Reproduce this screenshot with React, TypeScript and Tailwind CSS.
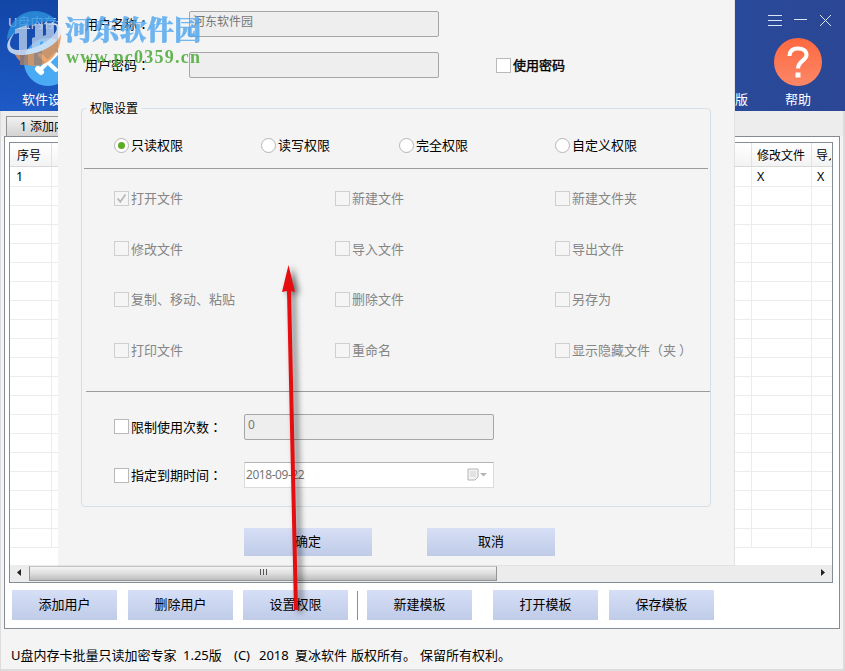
import type { FC, ReactNode } from 'react'
import clsx from 'clsx'

const radios = [
  { label: '只读权限', width: 'w-[147px]' },
  { label: '读写权限', width: 'w-[138px]' },
  { label: '完全权限', width: 'w-[156px]' },
  { label: '自定义权限', width: 'w-[100px]' },
]

const permissions = [
  ['打开文件', '新建文件', '新建文件夹'],
  ['修改文件', '导入文件', '导出文件'],
  ['复制、移动、粘贴', '删除文件', '另存为'],
  ['打印文件', '重命名', '显示隐藏文件（夹）'],
]

const columnWidths = ['w-[221px]', 'w-[220px]', 'w-[140px]']

const tableRows = Array.from({ length: 20 }, (_, i) => i)

// full-width colons and brackets sit in the middle of their box
const Label: FC<{ text: string }> = ({ text }) => (
  <span>
    {text.split(/([：（）])/).map((part, i) =>
      i % 2 === 1 ? (
        <span
          key={i}
          className={clsx("font-['Noto_Sans_CJK_TC',sans-serif] leading-none", part === '）' && 'ml-[3px]')}
        >
          {part}
        </span>
      ) : (
        part
      )
    )}
  </span>
)

interface CheckProps {
  label: string
  checked?: boolean
  disabled?: boolean
  className?: string
}

const Check: FC<CheckProps> = ({ label, checked, disabled, className }) => (
  <label className={clsx('flex h-5 items-center gap-[2px] whitespace-nowrap', disabled && 'text-[#858585]', className)}>
    <span
      className={clsx(
        'flex h-[15px] w-[15px] shrink-0 items-center justify-center border',
        disabled ? 'border-[#cfcfcf] bg-[#f5f5f5]' : 'border-[#b9b9b9] bg-white'
      )}
    >
      {checked ? (
        <svg width="11" height="11" viewBox="0 0 11 11" fill="none" stroke="#b8b8b8" strokeWidth="1.8">
          <path d="M1.5 5.5 4.3 8.7 9.5 1.5" />
        </svg>
      ) : null}
    </span>
    <Label text={label} />
  </label>
)

const Radio: FC<{ label: string; checked?: boolean; className?: string }> = ({ label, checked, className }) => (
  <label className={clsx('flex h-5 items-center gap-[2px] whitespace-nowrap', className)}>
    <span className="flex h-[15px] w-[15px] shrink-0 items-center justify-center rounded-full border border-[#b5b5b5] bg-white">
      {checked ? <span className="h-[7px] w-[7px] rounded-full bg-[#5cab22]" /> : null}
    </span>
    {label}
  </label>
)

const Button: FC<{ children: ReactNode; className?: string }> = ({ children, className }) => (
  <button
    type="button"
    className={clsx('shrink-0 bg-gradient-to-b from-[#d6dff6] to-[#bfcbe8] pb-[2px] text-center', className)}
  >
    {children}
  </button>
)

const Header: FC = () => (
  <header className="relative flex h-[111px] shrink-0 justify-between bg-gradient-to-r from-[#1b55bd] via-[#2550a8] to-[#2b4795] text-white">
    <div className="absolute inset-y-0 left-0 w-[300px] bg-gradient-to-b from-[#0c3c98]/60 to-[#2060d0]/50" />
    <div className="relative w-[58px] overflow-hidden">
      <div className="mt-[12px] ml-[8px] h-5 whitespace-nowrap text-[13px] text-[#c8d8f4]">U盘内存卡</div>
      <div className="mt-[6px] ml-[24px] flex h-[48px] w-[48px] items-center justify-center rounded-full bg-[#4aaaf4]">
        <svg width="28" height="28" viewBox="0 0 28 28" fill="none" stroke="white" strokeWidth="4" strokeLinecap="round">
          <path d="M6 7 22 22M22 6 5 23" />
          <path d="M4 21 7 24" strokeWidth="6" />
        </svg>
      </div>
      <div className="mt-[3px] ml-[22px] whitespace-nowrap text-[13px] leading-5">软件设置</div>
    </div>
    <div className="relative flex w-[115px] flex-col">
      <div className="mt-[14px] ml-[38px] flex h-[13px] items-center gap-[12px]">
        <svg width="14" height="13" viewBox="0 0 14 13" stroke="#dce5f6">
          <path d="M0 1.5H14M0 6.5H14M0 11.5H14" />
        </svg>
        <svg width="13" height="13" viewBox="0 0 13 13" stroke="#dce5f6">
          <path d="M0 5.5H13" />
        </svg>
        <svg width="13" height="13" viewBox="0 0 13 13" stroke="#dce5f6">
          <path d="M1 1 12 12M12 1 1 12" />
        </svg>
      </div>
      <div className="mt-[11px] ml-[44px] flex h-[48px] w-[48px] items-center justify-center rounded-full bg-gradient-to-b from-[#ff6840] to-[#fb8766]">
        <svg width="24" height="34" viewBox="0 0 24 34" fill="none" stroke="white" strokeWidth="4">
          <path d="M3.5 11C3.5 5.5 7 3.5 12 3.5S20.5 5.7 20.5 10C20.5 15.5 12 16 12 23.5" />
          <path d="M12 27.5V32.5" strokeWidth="5" />
        </svg>
      </div>
      <div className="mt-[3px] flex text-[13px] leading-5">
        <span className="ml-[5px] w-[50px]">版</span>
        <span>帮助</span>
      </div>
    </div>
  </header>
)

const Table: FC = () => (
  <div className="flex h-[441px] flex-col overflow-hidden border border-[#858c94] bg-white">
    <div className="flex h-[24px] shrink-0 border-b border-[#d9d9d9] bg-gradient-to-b from-white to-[#f3f3f4] text-[12px] leading-[25px] whitespace-nowrap">
      <div className="w-[42px] border-r border-[#e2e2e2] pl-[7px]">序号</div>
      <div className="w-[700px] border-r border-[#e2e2e2] pl-[6px]">用户</div>
      <div className="w-[60px] border-r border-[#e2e2e2] pl-[5px]">修改文件</div>
      <div className="w-[19px] overflow-hidden pl-[4px]">导入</div>
    </div>
    <div className="h-[398px] overflow-hidden">
      {tableRows.map((row) => (
        <div
          key={row}
          className={clsx('flex border-b border-[#ececec] text-[12.5px] leading-[20px]', row === 0 ? 'h-[20px]' : 'h-[19px]')}
        >
          <div className="w-[42px] border-r border-[#ececec] pl-[6px]">{row === 0 ? '1' : ''}</div>
          <div className="w-[700px] border-r border-[#ececec] pl-[6px]">{row === 0 ? '河' : ''}</div>
          <div className="w-[60px] border-r border-[#ececec] pl-[5px]">{row === 0 ? 'X' : ''}</div>
          <div className="pl-[5px]">{row === 0 ? 'X' : ''}</div>
        </div>
      ))}
    </div>
    <div className="flex h-[17px] shrink-0 items-center bg-[#ececec]">
      <svg width="19" height="17" viewBox="0 0 19 17">
        <path d="M11 4V11L7 7.5Z" fill="#222" />
      </svg>
      <div className="flex h-[15px] w-[468px] items-center justify-center border border-[#969696] border-t-[#c4c4c4] bg-gradient-to-b from-[#f4f4f4] via-[#dedede] to-[#bdbdbd] pb-[2px]">
        <svg width="9" height="7" viewBox="0 0 9 7" stroke="#555">
          <path d="M1.5 0V6M4.5 0V6M7.5 0V6" />
        </svg>
      </div>
      <svg className="ml-auto" width="19" height="17" viewBox="0 0 19 17">
        <path d="M8 4V11L12 7.5Z" fill="#222" />
      </svg>
    </div>
  </div>
)

const PermissionDialog: FC = () => (
  <div className="absolute top-0 left-[58px] flex h-[566px] w-[677px] flex-col border-r border-b border-[#e2e2e2] bg-[#f4f4f4]">
    <div className="mt-[11px] ml-[27px] flex items-center">
      <span className="w-[104px]">
        <Label text="用户名称：" />
      </span>
      <div className="h-[26px] w-[250px] rounded-[2px] border border-[#a6a6a6] bg-[#eeeeee] pl-[3px] text-[12px] leading-[20px] text-[#777]">
        河东软件园
      </div>
    </div>
    <div className="mt-[15px] ml-[27px] flex items-center">
      <span className="w-[104px]">
        <Label text="用户密码：" />
      </span>
      <div className="h-[26px] w-[250px] rounded-[2px] border border-[#a6a6a6] bg-[#eeeeee]" />
      <Check label="使用密码" className="ml-[57px] [-webkit-text-stroke:0.4px_black]" />
    </div>

    <fieldset className="mt-[21px] ml-[23px] flex h-[408px] w-[630px] min-w-0 flex-col rounded-[4px] border border-[#d5dfe5]">
      <legend className="ml-[4px] h-[18px] px-[4px] text-[12px] leading-[19px]">权限设置</legend>
      <div className="mt-[18px] ml-[32px] flex">
        {radios.map((radio, i) => (
          <Radio key={radio.label} label={radio.label} checked={i === 0} className={radio.width} />
        ))}
      </div>
      <div className="mt-[13px] ml-[2px] h-px w-[624px] shrink-0 bg-[#9b9b9b]" />
      <div className="mt-[19px] ml-[32px] flex flex-col gap-[30.7px]">
        {permissions.map((row, i) => (
          <div key={row[0]} className="flex">
            {row.map((label, j) => (
              <Check key={label} label={label} disabled checked={i === 0 && j === 0} className={columnWidths[j]} />
            ))}
          </div>
        ))}
      </div>
      <div className="mt-[30.7px] ml-[4px] h-px w-[624px] shrink-0 bg-[#9b9b9b]" />
      <div className="mt-[22px] ml-[32px] flex items-center">
        <Check label="限制使用次数：" className="w-[130px]" />
        <div className="h-[26px] w-[250px] rounded-[2px] border border-[#a6a6a6] bg-[#eeeeee] pl-[3px] text-[12px] leading-[20px] text-[#777]">
          0
        </div>
      </div>
      <div className="mt-[22.3px] ml-[32px] flex items-center">
        <Check label="指定到期时间：" className="w-[130px]" />
        <div className="flex h-[26px] w-[250px] items-center border border-[#dadada] border-t-[#b5b5b5] bg-white pr-[5px] pb-px pl-px text-[12px] tracking-[-0.45px] text-[#777]">
          2018-09-22
          <svg className="ml-auto" width="21" height="13" viewBox="0 0 21 13">
            <path d="M1 1H11V9L8 12H1Z" fill="#f4f4f4" stroke="#b4b4b4" />
            <path d="M3 4H9M3 6H9M3 8H9" stroke="#d0d0d0" />
            <path d="M13 5H20L16.5 8.5Z" fill="#b4b4b4" />
          </svg>
        </div>
      </div>
    </fieldset>

    <div className="mt-[21px] ml-[186px] flex gap-[55px]">
      <Button className="h-[28px] w-[128px]">确定</Button>
      <Button className="h-[28px] w-[128px]">取消</Button>
    </div>
  </div>
)

const Watermark: FC = () => (
  <div className="absolute top-[9px] left-[4px] flex opacity-80">
    <svg width="60" height="60" viewBox="0 0 60 60">
      <path d="M3 31C4 14 16 2 31 2C41 2 50 7 54 14C46 9 16 16 3 31Z" fill="#2f93df" />
      <path d="M10 44C22 46 43 40 52 27L57 25C57 43 46 57 30 57C21 57 14 52 10 44Z" fill="#e8924d" />
      <path d="M11 20 23 16V43H15V24L11 25ZM31 15H39V27L42 26V14H50V30C47 36 43 39 39 41V32L36 33V42H28V29L31 28Z" fill="#b5cdea" />
      <path d="M24 43V56H16V44ZM38 40V56H30V43Z" fill="#ad7f62" />
      <path d="M11 23C-3 37 3 47 20 46C39 45 60 32 57 20C56 15 51 13 44 14C52 14 55 18 51 24C44 35 25 42 13 41C4 40 4 33 11 23Z" fill="#e4edf7" />
    </svg>
    <div className="flex flex-col whitespace-nowrap">
      <div className="mt-[3px] ml-px font-['Noto_Serif_CJK_SC','Noto_Sans_CJK_SC',serif] text-[27px] leading-[34px] font-black tracking-[0.3px] text-[#4ba4ef] [-webkit-text-stroke:0.5px_#4ba4ef]">
        河东软件园
      </div>
      <div className="ml-[2px] font-['Liberation_Serif',serif] text-[18px] leading-[22px] font-bold tracking-[1.25px] text-[#42a52d]">
        www.pc0359.cn
      </div>
    </div>
  </div>
)

const Arrow: FC = () => (
  <svg className="pointer-events-none absolute top-[260px] left-[270px] drop-shadow-[4px_2px_3px_rgba(0,0,0,0.6)]" width="45" height="360" viewBox="0 0 45 360">
    <path d="M18.5 5 25 32 21 31 28 350H24L17 31 12 32Z" fill="#e60d10" />
  </svg>
)

export default function App() {
  return (
    <main className="relative flex h-[671px] w-[845px] flex-col overflow-hidden bg-[#f4f4f4] font-['Noto_Sans','Noto_Sans_CJK_SC',sans-serif] text-[13px] leading-5 text-black">
      <Header />
      <div className="flex grow flex-col border-r-2 border-b-2 border-l border-[#dcdcdc]">
        <div className="flex h-[25px] shrink-0 items-end bg-[#ededed] pl-[5px]">
          <div className="h-[20px] w-[100px] border border-b-0 border-[#8d9296] bg-gradient-to-b from-[#f1f1f1] to-[#d3d3d3] pl-[13px] text-[12px] leading-[20px]">
            1 添加内存卡
          </div>
        </div>
        <section className="ml-[3px] flex h-[493px] w-[836px] flex-col border border-[#858c94] bg-white pt-[5px] pr-[6px] pl-[4px]">
          <Table />
          <div className="mt-[7px] ml-[3px] flex h-[30px] items-center">
            <Button className="h-[30px] w-[105px]">添加用户</Button>
            <Button className="ml-[11px] h-[30px] w-[105px]">删除用户</Button>
            <Button className="ml-[10px] h-[30px] w-[105px]">设置权限</Button>
            <div className="ml-[9px] h-[29px] w-px bg-[#909090]" />
            <Button className="ml-[9px] h-[30px] w-[105px]">新建模板</Button>
            <Button className="ml-[21px] h-[30px] w-[105px]">打开模板</Button>
            <Button className="ml-[11px] h-[30px] w-[105px]">保存模板</Button>
          </div>
        </section>
        <footer className="mt-[16px] ml-[10px] flex whitespace-pre">
          <span className="w-[172px]">U盘内存卡批量只读加密专家</span>
          <span className="w-[51px]">1.25版</span>
          <span className="w-[25px]">(C)</span>
          <span className="w-[36px]">2018</span>
          <span className="w-[56px]">夏冰软件</span>
          <span className="w-[69px]">版权所有。</span>
          <span>保留所有权利。</span>
        </footer>
      </div>
      <PermissionDialog />
      <Watermark />
      <Arrow />
    </main>
  )
}
